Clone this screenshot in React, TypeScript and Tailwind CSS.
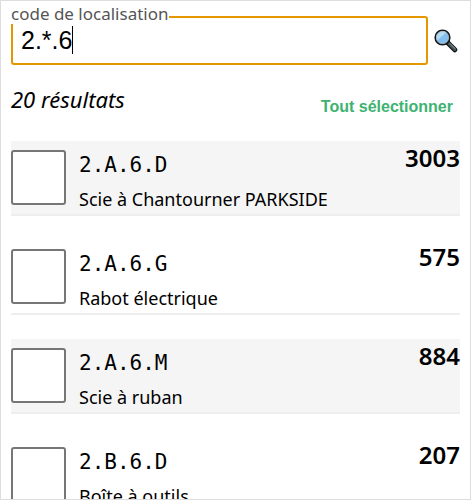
import React, { useState } from 'react';

interface Result {
  code: string;
  name: string;
  count: number;
}

const results: Result[] = [
  { code: '2.A.6.D', name: 'Scie à Chantourner PARKSIDE', count: 3003 },
  { code: '2.A.6.G', name: 'Rabot électrique', count: 575 },
  { code: '2.A.6.M', name: 'Scie à ruban', count: 884 },
  { code: '2.B.6.D', name: 'Boîte à outils', count: 207 },
];

function SearchIcon() {
  return (
    <svg viewBox="0 0 24 24" className="size-6" aria-hidden="true">
      <path d="M14 14l6.8 6.8" stroke="#111" strokeWidth="5" strokeLinecap="round" />
      <path d="M15 14.6l5.8 5.8" stroke="#48565b" strokeWidth="3" strokeLinecap="round" />
      <path d="M16.2 14.8l4.6 4.6" stroke="#829095" strokeWidth="1" strokeLinecap="round" />
      <circle cx="8.5" cy="8.5" r="7.3" fill="#83beec" stroke="#111" strokeWidth="1.6" />
      <path d="M3 11.5A6.4 6.4 0 0 1 12.5 3.4z" fill="#b5daf4" />
      <circle cx="8.5" cy="8.5" r="6.2" fill="none" stroke="#9aabb3" strokeWidth="0.7" />
    </svg>
  );
}

export default function App() {
  const [query, setQuery] = useState('2.*.6');
  const [selected, setSelected] = useState<string[]>([]);

  const toggle = (code: string) => {
    setSelected(selected.includes(code) ? selected.filter((c) => c !== code) : [...selected, code]);
  };

  return (
    <div className="h-screen overflow-hidden border border-[#dddddd] bg-white px-[10px] pt-[15px] font-['Noto_Sans',sans-serif] text-black">
      {/* Search field */}
      <form className="flex items-center gap-[6px]" onSubmit={(e) => e.preventDefault()}>
        <div className="relative min-w-0 flex-1">
          <label
            htmlFor="location"
            className="absolute -top-3 left-0 bg-white text-[17px] leading-5 text-[#555555]"
          >
            code de localisation
          </label>
          <input
            id="location"
            type="text"
            value={query}
            onChange={(e) => setQuery(e.target.value)}
            className="block h-[49px] w-full rounded-[3px] border-2 border-[#e59700] bg-white px-2 font-['Liberation_Sans',sans-serif] text-[25px] caret-transparent outline-none"
          />
          {/* Text cursor, placed after the typed text */}
          <div
            aria-hidden="true"
            className="pointer-events-none absolute top-[10px] left-[61px] h-7 w-px bg-black"
          />
        </div>
        <button type="submit" aria-label="Rechercher" className="mr-[2px]">
          <SearchIcon />
        </button>
      </form>

      {/* Summary */}
      <div className="flex h-[76px] items-center justify-between pr-[7px]">
        <p className="pb-2 text-[22px] leading-7 italic">20 résultats</p>
        <button
          type="button"
          onClick={() => setSelected(results.map((r) => r.code))}
          className="pt-2 font-['Liberation_Sans',sans-serif] text-base font-bold text-[#3cb371]"
        >
          Tout sélectionner
        </button>
      </div>

      {/* Results */}
      <ul className="flex flex-col gap-6">
        {results.map((result) => (
          <li
            key={result.code}
            className="flex h-[75px] border-b-2 border-[#eeeeee] odd:bg-[#f5f5f5]"
          >
            <input
              id={result.code}
              type="checkbox"
              checked={selected.includes(result.code)}
              onChange={() => toggle(result.code)}
              className="mt-[9px] mr-[13px] size-[55px] shrink-0 appearance-none rounded-[3px] border-2 border-[#767676] bg-white checked:bg-[#3cb371]"
            />
            <label htmlFor={result.code} className="min-w-0 flex-1 pt-2">
              <span className="block font-['DejaVu_Sans_Mono',monospace] text-[21px] leading-8">
                {result.code}
              </span>
              <span className="block text-lg leading-9">{result.name}</span>
            </label>
            <strong className="text-2xl leading-[34px] font-semibold">{result.count}</strong>
          </li>
        ))}
      </ul>
    </div>
  );
}
